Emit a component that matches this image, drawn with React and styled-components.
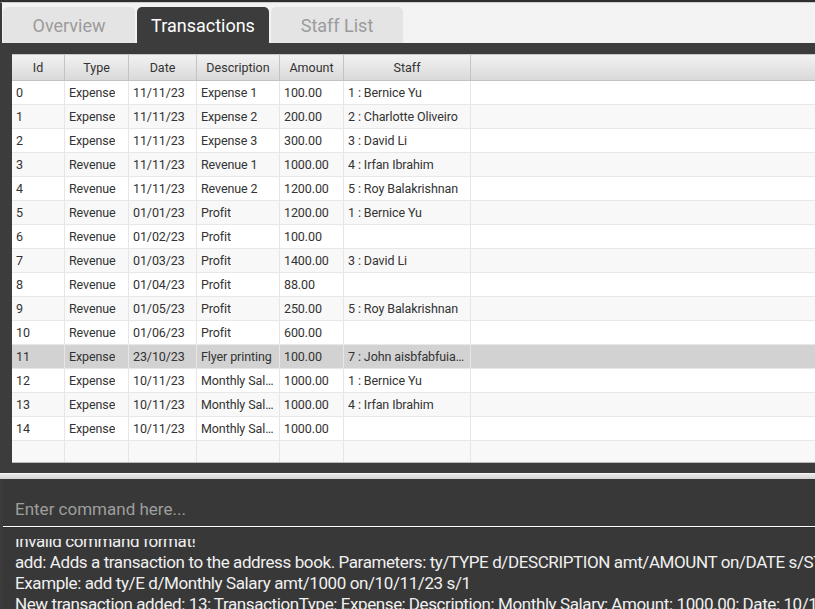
import styled, { createGlobalStyle } from "styled-components";

const GlobalStyle = createGlobalStyle`
  html, body {
    margin: 0;
    padding: 0;
    background: #3c3c3c;
    overflow: hidden;
  }
  * { box-sizing: border-box; }
`;

const Window = styled.div`
  width: 815px;
  height: 609px;
  display: flex;
  flex-direction: column;
  background: #3c3c3c;
  font-family: Roboto, "Noto Sans", sans-serif;
  border-top: 2px solid #2f2f2f;
`;

const TabBar = styled.div`
  height: 41px;
  display: flex;
  align-items: flex-end;
  gap: 2px;
  padding-left: 1px;
  background: #f3f3f3;
  border-top: 1px solid #cdcdcd;
  border-left: 2px solid #3a3a3a;
`;

const Tab = styled.div`
  width: 132px;
  height: 36px;
  display: flex;
  align-items: center;
  justify-content: center;
  border-radius: 5px 5px 0 0;
  font-size: 18px;
  background: ${({ $active }) => ($active ? "#3c3c3c" : "#e4e4e4")};
  color: ${({ $active }) => ($active ? "#ffffff" : "#9b9b9b")};
`;

const Content = styled.div`
  padding: 11px 0 10px 12px;
  background: #3c3c3c;
`;

const Table = styled.div`
  background: #fff;
  border-bottom: 1px solid #b9b9b9;
  height: 409px;
  overflow: hidden;
`;

const cols = "52px 64px 68px 83px 64px 127px 1fr";

const HeaderRow = styled.div`
  display: grid;
  grid-template-columns: ${cols};
  height: 27px;
  background: linear-gradient(#f2f2f2, #d9d9d9);
  border-top: 1px solid #c8c8c8;
  border-bottom: 1px solid #c2c2c2;
`;

const HeaderCell = styled.div`
  display: flex;
  align-items: center;
  justify-content: center;
  font-size: 12.5px;
  color: #333;
  border-left: ${({ $first }) => ($first ? "none" : "1px solid #c4c4c4")};
`;

const Row = styled.div`
  display: grid;
  grid-template-columns: ${cols};
  height: 24px;
  border-bottom: 1px solid #e8e8e8;
  background: ${({ $selected, $odd }) =>
    $selected ? "#d2d2d2" : $odd ? "#f8f8f8" : "#ffffff"};
`;

const Cell = styled.div`
  display: flex;
  align-items: center;
  padding: 0 4px;
  font-size: 12.5px;
  color: #333;
  white-space: nowrap;
  overflow: hidden;
  letter-spacing: -0.1px;
  border-left: ${({ $first }) => ($first ? "none" : "1px solid #e6e6e6")};

  span {
    overflow: hidden;
    text-overflow: ellipsis;
  }
`;

const Divider = styled.div`
  height: 6px;
  background: linear-gradient(#e8e8e8, #d4d4d4);
  border-top: 1px solid #f4f4f4;
`;

const CommandBox = styled.div`
  height: 48px;
  margin-left: 3px;
  background: #383838;
  border-bottom: 1px solid #ffffff;
  display: flex;
  align-items: flex-end;
  padding: 0 0 7px 12px;
  font-size: 17px;
  color: #9e9e9e;
`;

const ResultArea = styled.div`
  flex: 1;
  display: flex;
  flex-direction: column;
  margin-left: 3px;
  padding-top: 11px;
  background: #383838;
  border-top: 1px solid #2f2f2f;
  overflow: hidden;
`;

const ResultViewport = styled.div`
  flex: 1;
  overflow: hidden;
`;

const ResultText = styled.div`
  margin-top: -8px;
  padding-left: 12px;
  font-size: 17px;
  line-height: 21px;
  letter-spacing: -0.4px;
  color: #f0f0f0;
  white-space: pre;
`;

const headers = ["Id", "Type", "Date", "Description", "Amount", "Staff", ""];

const rows = [
  ["0", "Expense", "11/11/23", "Expense 1", "100.00", "1 : Bernice Yu"],
  ["1", "Expense", "11/11/23", "Expense 2", "200.00", "2 : Charlotte Oliveiro"],
  ["2", "Expense", "11/11/23", "Expense 3", "300.00", "3 : David Li"],
  ["3", "Revenue", "11/11/23", "Revenue 1", "1000.00", "4 : Irfan Ibrahim"],
  ["4", "Revenue", "11/11/23", "Revenue 2", "1200.00", "5 : Roy Balakrishnan"],
  ["5", "Revenue", "01/01/23", "Profit", "1200.00", "1 : Bernice Yu"],
  ["6", "Revenue", "01/02/23", "Profit", "100.00", ""],
  ["7", "Revenue", "01/03/23", "Profit", "1400.00", "3 : David Li"],
  ["8", "Revenue", "01/04/23", "Profit", "88.00", ""],
  ["9", "Revenue", "01/05/23", "Profit", "250.00", "5 : Roy Balakrishnan"],
  ["10", "Revenue", "01/06/23", "Profit", "600.00", ""],
  ["11", "Expense", "23/10/23", "Flyer printing", "100.00", "7 : John aisbfabfuiabsfiuab"],
  ["12", "Expense", "10/11/23", "Monthly Salary", "1000.00", "1 : Bernice Yu"],
  ["13", "Expense", "10/11/23", "Monthly Salary", "1000.00", "4 : Irfan Ibrahim"],
  ["14", "Expense", "10/11/23", "Monthly Salary", "1000.00", ""],
  ["", "", "", "", "", ""],
];

const output = [
  "Invalid command format!",
  "add: Adds a transaction to the address book. Parameters: ty/TYPE d/DESCRIPTION amt/AMOUNT on/DATE s/STAFF",
  "Example: add ty/E d/Monthly Salary amt/1000 on/10/11/23 s/1",
  "New transaction added: 13; TransactionType: Expense; Description: Monthly Salary; Amount: 1000.00; Date: 10/11/23",
];

export default function App() {
  return (
    <Window>
      <GlobalStyle />
      <TabBar>
        <Tab>Overview</Tab>
        <Tab $active>Transactions</Tab>
        <Tab>Staff List</Tab>
      </TabBar>

      <Content>
        <Table>
          <HeaderRow>
            {headers.map((h, i) => (
              <HeaderCell key={i} $first={i === 0}>
                {h}
              </HeaderCell>
            ))}
          </HeaderRow>
          {rows.map((r, i) => (
            <Row key={i} $odd={i % 2 === 1} $selected={i === 11}>
              {[...r, ""].map((c, j) => (
                <Cell key={j} $first={j === 0}>
                  <span>{c}</span>
                </Cell>
              ))}
            </Row>
          ))}
        </Table>
      </Content>

      <Divider />
      <CommandBox>Enter command here...</CommandBox>
      <ResultArea>
        <ResultViewport>
          <ResultText>{output.join("\n")}</ResultText>
        </ResultViewport>
      </ResultArea>
    </Window>
  );
}
